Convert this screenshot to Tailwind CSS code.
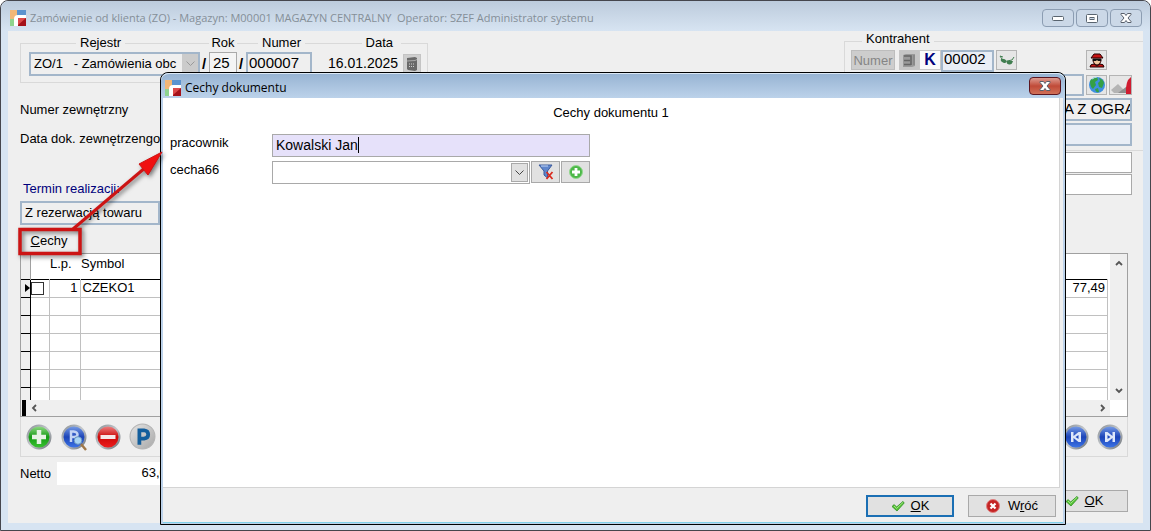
<!DOCTYPE html>
<html lang="pl">
<head>
    <meta charset="UTF-8">
    <meta name="viewport" content="width=device-width, initial-scale=1.0">
    <title>Zamówienie od klienta (ZO)</title>
    <script src="https://cdn.jsdelivr.net/npm/@tailwindcss/browser@4"></script>
</head>
<body class="relative min-h-screen bg-white font-['Liberation_Sans',Arial,sans-serif] text-[13px] leading-4 text-black">
    <!-- Shared icons -->
    <svg class="absolute size-0">
        <defs>
            <linearGradient id="gGreen" x1="0" y1="0" x2="0" y2="1"><stop offset="0" stop-color="#9adf8c"/><stop offset=".5" stop-color="#149a14"/><stop offset="1" stop-color="#3cc634"/></linearGradient>
            <linearGradient id="gBlue" x1="0" y1="0" x2="0" y2="1"><stop offset="0" stop-color="#7da2ea"/><stop offset=".5" stop-color="#1c44b8"/><stop offset="1" stop-color="#3f78ea"/></linearGradient>
            <linearGradient id="gRed" x1="0" y1="0" x2="0" y2="1"><stop offset="0" stop-color="#f08a8a"/><stop offset=".5" stop-color="#cc0808"/><stop offset="1" stop-color="#f02020"/></linearGradient>
            <linearGradient id="gGray" x1="0" y1="0" x2="1" y2="1"><stop offset="0" stop-color="#e4e4e4"/><stop offset="1" stop-color="#a8a8a8"/></linearGradient>
            <linearGradient id="gRing" x1="0" y1="0" x2="1" y2="1"><stop offset="0" stop-color="#8c9298"/><stop offset=".5" stop-color="#c4c8cc"/><stop offset="1" stop-color="#6c7278"/></linearGradient>
        </defs>
        <symbol id="logo" viewBox="0 0 16 16">
            <rect width="7" height="9" fill="#f2b777"/>
            <rect x="7" width="9" height="6" fill="#5b93cf"/>
            <rect y="9" width="4" height="7" fill="#8fd48f"/>
            <path d="M4 16V9q0-4 4-4h8v4H9v7z" fill="#fff"/>
            <rect x="8" y="8" width="8" height="8" fill="#a5121b"/>
            <path d="M8 8h8l-8 7z" fill="#dc4a4a"/>
        </symbol>
        <symbol id="tick" viewBox="0 0 14 12">
            <path d="M1 6.5 3.2 4.6 5.6 7 12 1.4 13.2 3 6 11z" fill="#55c234" stroke="#2f8f25" stroke-width=".8"/>
            <path d="M3 6 5.6 8.4 12 2.4" fill="none" stroke="#a9ea8c" stroke-width=".9"/>
        </symbol>
        <symbol id="cross" viewBox="0 0 12 10">
            <path d="M1 .500h3.500L6 2.500 7.500.500H11v1L8 5l3 3.500v1H7.500L6 7.500 4.500 9.500H1v-1L4 5 1 1.500z" fill="#fff" stroke="#59606c"/>
        </symbol>
    </svg>

    <!-- Main window -->
    <div class="flex min-h-screen flex-col rounded-t-lg border border-[#45464d] bg-[#d7e4f2]">
        <header class="flex h-[30px] items-center justify-between rounded-t-lg bg-linear-to-b from-[#bccbdc] to-[#d7e4f2] pt-1 pr-2 pl-[9px]">
            <div class="flex items-center gap-1 font-['Open_Sans','Noto_Sans',sans-serif] text-[11px] text-[#858f98]">
                <svg class="size-4"><use href="#logo"/></svg>
                <h1 class="whitespace-pre">Zamówienie od klienta (ZO) - Magazyn: M00001 MAGAZYN CENTRALNY  Operator: SZEF Administrator systemu</h1>
            </div>
            <div class="flex gap-[2px]">
                <button type="button" aria-label="Minimalizuj" class="flex h-[18px] w-8 items-center justify-center rounded-sm border border-[#8c9db2] bg-[#cbd8e7]">
                    <svg class="h-[5px] w-3" viewBox="0 0 12 5"><rect x=".5" y=".5" width="11" height="4" rx="1" fill="#fff" stroke="#59646f"/></svg>
                </button>
                <button type="button" aria-label="Maksymalizuj" class="flex h-[18px] w-8 items-center justify-center rounded-sm border border-[#8c9db2] bg-[#cbd8e7]">
                    <svg class="h-[9px] w-3" viewBox="0 0 12 9"><rect x=".5" y=".5" width="11" height="8" rx="1" fill="#fff" stroke="#59646f"/><rect x="4" y="3.5" width="4" height="2" fill="#cbd8e7" stroke="#59646f"/></svg>
                </button>
                <button type="button" aria-label="Zamknij" class="flex h-[18px] w-8 items-center justify-center rounded-sm border border-[#8c9db2] bg-[#cbd8e7]">
                    <svg class="h-[10px] w-3"><use href="#cross"/></svg>
                </button>
            </div>
        </header>

        <main class="mx-[7px] mb-[7px] flex grow flex-col bg-[#efefef]">
            <!-- Document header -->
            <div class="flex items-start justify-between pl-3">
                <div>
                    <div class="mt-3 flex h-10 w-[408px] gap-[2px] border border-[#d9d9d9] pl-2 text-[15px]">
                        <div class="flex w-[171px] flex-col">
                            <label for="rejestr" class="-mt-[10px] ml-[47px] self-start bg-[#efefef] px-1 text-[13px] leading-[18px]">Rejestr</label>
                            <div class="relative">
                                <select id="rejestr" class="h-6 w-full appearance-none border-2 border-[#a3b6ca] bg-[#efefef] pl-[3px] text-[13px]">
                                    <option>ZO/1 &nbsp; - Zamówienia obc</option>
                                </select>
                                <span class="pointer-events-none absolute top-[2px] right-[2px] flex h-5 w-4 items-center justify-center bg-[#cbcbcb]">
                                    <svg class="h-[6px] w-[9px]" viewBox="0 0 9 6"><path d="M.5 .5l4 4 4-4" fill="none" stroke="#9a9a9a"/></svg>
                                </span>
                            </div>
                        </div>
                        <span class="w-[5px] pt-[10px] leading-5 font-bold">/</span>
                        <div class="flex w-7 flex-col">
                            <label for="rok" class="-mt-[10px] bg-[#efefef] text-center text-[13px] leading-[18px]">Rok</label>
                            <input id="rok" value="25" class="h-6 w-full border border-[#a9a9a9] bg-[#f4f4f4] pb-[3px] pl-[3px]">
                        </div>
                        <span class="w-[5px] pt-[10px] leading-5 font-bold">/</span>
                        <div class="flex w-[66px] flex-col">
                            <label for="numer" class="-mt-[10px] ml-3 self-start bg-[#efefef] px-1 text-[13px] leading-[18px]">Numer</label>
                            <input id="numer" value="000007" class="h-6 w-full border-2 border-[#a3b6ca] bg-[#efefef] pb-[3px] pl-px">
                        </div>
                        <div class="ml-[14px] flex w-[73px] flex-col">
                            <label for="data" class="-mt-[10px] self-end bg-[#efefef] px-1 pr-2 text-[13px] leading-[18px]">Data</label>
                            <input id="data" value="16.01.2025" class="h-6 w-full bg-[#efefef] pb-[3px] text-sm">
                        </div>
                        <button type="button" aria-label="Kalendarz" class="mt-[10px] flex h-5 w-[18px] items-center justify-center border border-[#c4c4c4] bg-[#cfcfcf]">
                            <svg class="h-4 w-3" viewBox="0 0 12 16"><path d="M1 2l8-1 2 1v12l-2 1-7-1-1-1z" fill="#6a6a6a"/><path d="M1 5l8-.5 2-1" stroke="#aaa" fill="none"/><path d="M3 8h5M3 10.500h5" stroke="#d0d0d0" stroke-dasharray="1 1" fill="none"/></svg>
                        </button>
                    </div>
                    <label for="nrzew" class="mt-[19px] block">Numer zewnętrzny</label>
                    <label for="datazew" class="mt-[13px] block">Data dok. zewnętrzengo</label>
                </div>

                <fieldset class="mt-[10px] flex h-[110px] w-[299px] flex-col gap-[2px] border border-r-0 border-[#d9d9d9] pr-[11px] pl-[6px]">
                    <div class="flex h-[30px] flex-col">
                        <label for="kontrahent" class="-mt-[11px] mb-[3px] ml-[11px] self-start bg-[#efefef] px-1">Kontrahent</label>
                        <div class="flex h-[22px] text-base">
                            <button type="button" class="h-5 w-11 border border-[#bdbdbd] bg-[#cdcdcd] text-[13px] text-[#858585]">Numer</button>
                            <button type="button" aria-label="Kartoteka" class="ml-1 flex size-5 items-center justify-center bg-[#c6c6c6]">
                                <svg class="size-4" viewBox="0 0 16 16"><path d="M2 3l3-1h9v12l-3 1H2z" fill="#9a9a9a"/><path d="M3 4h7v9M3 8.500h6M3 12.500h7" stroke="#666" stroke-width="1.600" fill="none"/><path d="M13 3v10" stroke="#7a7a7a"/></svg>
                            </button>
                            <button type="button" class="h-5 w-[22px] border border-[#c8c8c8] bg-[#fafafa] leading-4 font-bold text-[#00007c]">K</button>
                            <input id="kontrahent" value="00002" class="h-[22px] w-[53px] border-2 border-[#a3b6ca] bg-[#e9eef6] pb-[3px] pl-px text-[15px]">
                            <button type="button" aria-label="Podgląd" class="ml-[2px] flex h-5 w-[21px] items-center justify-center border border-[#b4b4b4] bg-[#e6e6e6]">
                                <svg class="h-3 w-4" viewBox="0 0 16 12"><path d="M3 5L1 2l3 1M8 7l5-1 2-3" fill="none" stroke="#417e50"/><path d="M2 5q3-1 6 2-1 3-4 1.500T2 5zM8 7h6q-1 4-4 3.500T8 7z" fill="#417e50"/></svg>
                            </button>
                            <button type="button" aria-label="Operator" class="mr-[25px] ml-auto flex h-5 w-[21px] items-center justify-center border border-[#b4b4b4] bg-[#e6e6e6]">
                                <svg class="size-4" viewBox="0 0 16 16"><path d="M2 6l3-4h6l3 4z" fill="#c81414" stroke="#200"/><path d="M4 7h8v2q-1 4-4 4T4 9z" fill="#f0c8a0" stroke="#300"/><path d="M4 7h8v2H9L8 8 7 9H4z" fill="#111"/><path d="M1 15q0-3 4-3l3 2 3-2q4 0 4 3z" fill="#c81414" stroke="#200"/></svg>
                            </button>
                        </div>
                    </div>
                    <div class="flex h-[22px] items-center">
                        <input aria-label="Grupa" class="mr-[2px] h-[22px] min-w-0 grow border-2 border-[#a3b6ca] bg-[#efefef]">
                        <button type="button" aria-label="Strona WWW" class="flex h-5 w-[21px] items-center justify-center border border-[#b4b4b4] bg-[#e6e6e6]">
                            <svg class="size-[18px]" viewBox="0 0 18 18"><circle cx="9" cy="9" r="8" fill="#3f8fe0"/><path d="M2 5q3-4 7-4l1 3-3 2 1 3-3 4q-3-2-3-8zM11 2q4 1 5 5l-2 5-3-1-1-4 2-2zM7 13l3-1 1 4q-3 1-4-3z" fill="#35a045"/><path d="M4 3q3-2 5-2" stroke="#bfe4ff" fill="none"/></svg>
                        </button>
                        <button type="button" aria-label="Status" class="ml-[2px] flex h-5 w-[23px] items-center justify-end border border-[#b4b4b4] bg-[#e6e6e6]">
                            <svg class="h-[18px] w-5" viewBox="0 0 20 18"><path d="M0 14l7-6 9 9H3z" fill="#b4b4b4"/><path d="M7 17l8-6v6z" fill="#8e8e8e"/><path d="M20 1q-6 4-5 17h5z" fill="#d01c30"/></svg>
                        </button>
                    </div>
                    <input aria-label="Nazwa kontrahenta" value="KA Z OGRANICZONĄ" class="h-[23px] w-full border-2 border-[#a3b6ca] bg-[#efefef] pb-[3px] pl-[201px] text-[15px]">
                    <input aria-label="Adres kontrahenta" class="h-[23px] w-full border-2 border-[#a3b6ca] bg-[#e9eef6]">
                </fieldset>
            </div>

            <div class="flex justify-between pr-[11px] pl-3">
                <div class="pt-[30px]">
                    <label for="rezerwacja" class="block pl-[3px] text-[#00007c]">Termin realizacji:</label>
                    <select id="rezerwacja" class="mt-1 block h-6 w-[140px] appearance-none border-2 border-[#a3b6ca] bg-[#efefef] pl-[3px]">
                        <option>Z rezerwacją towaru</option>
                    </select>
                </div>
                <div class="flex w-[200px] flex-col gap-px pt-px">
                    <input id="nrzew" class="h-[21px] border border-[#a9a9a9] bg-white">
                    <input id="datazew" class="h-[21px] border border-[#a9a9a9] bg-white">
                </div>
            </div>

            <button type="button" class="mt-1 ml-3 h-6 w-[58px] self-start"><u>C</u>echy</button>

            <!-- Items grid -->
            <section class="mr-[15px] ml-3">
                <div class="border border-[#a0a0a0] bg-white">
                    <div class="flex">
                        <table class="w-full table-fixed border-collapse">
                            <thead>
                                <tr class="h-[25px] border-b border-black align-top text-left">
                                    <th class="w-[9px] border-r border-[#a0a0a0] bg-[#efefef]"></th>
                                    <th class="w-[19px]"></th>
                                    <th class="w-[31px] pt-[2px] pl-px font-normal">L.p.</th>
                                    <th class="pt-[2px] pl-px font-normal">Symbol</th>
                                    <th class="w-[120px]"></th>
                                </tr>
                            </thead>
                            <tbody>
                                <tr class="h-[18px]">
                                    <td class="border-r border-b border-black bg-[#efefef]"><svg class="ml-auto h-[8px] w-[5px]" viewBox="0 0 5 8"><path d="M0 0l5 4-5 4z"/></svg></td>
                                    <td class="border border-t-0 border-[#c0c0c0]"><input type="checkbox" aria-label="Zaznacz pozycję 1" class="block size-[13px] appearance-none border border-[#333] bg-white"></td>
                                    <td class="border border-t-0 border-[#c0c0c0] pr-[2px] text-right">1</td>
                                    <td class="border border-t-0 border-[#c0c0c0] pl-[2px]">CZEKO1</td>
                                    <td class="border border-t-0 border-[#c0c0c0] pr-[2px] text-right">77,49</td>
                                </tr>
                                <tr class="h-[18px]"><td class="border-r border-b border-black bg-[#efefef]"></td><td class="border border-[#c0c0c0]"></td><td class="border border-[#c0c0c0]"></td><td class="border border-[#c0c0c0]"></td><td class="border border-[#c0c0c0]"></td></tr>
                                <tr class="h-[18px]"><td class="border-r border-b border-black bg-[#efefef]"></td><td class="border border-[#c0c0c0]"></td><td class="border border-[#c0c0c0]"></td><td class="border border-[#c0c0c0]"></td><td class="border border-[#c0c0c0]"></td></tr>
                                <tr class="h-[18px]"><td class="border-r border-b border-black bg-[#efefef]"></td><td class="border border-[#c0c0c0]"></td><td class="border border-[#c0c0c0]"></td><td class="border border-[#c0c0c0]"></td><td class="border border-[#c0c0c0]"></td></tr>
                                <tr class="h-[18px]"><td class="border-r border-b border-black bg-[#efefef]"></td><td class="border border-[#c0c0c0]"></td><td class="border border-[#c0c0c0]"></td><td class="border border-[#c0c0c0]"></td><td class="border border-[#c0c0c0]"></td></tr>
                                <tr class="h-[18px]"><td class="border-r border-b border-black bg-[#efefef]"></td><td class="border border-[#c0c0c0]"></td><td class="border border-[#c0c0c0]"></td><td class="border border-[#c0c0c0]"></td><td class="border border-[#c0c0c0]"></td></tr>
                                <tr class="h-[13px]"><td class="border-r border-black bg-[#efefef]"></td><td class="border-x border-[#c0c0c0]"></td><td class="border-x border-[#c0c0c0]"></td><td class="border-x border-[#c0c0c0]"></td><td class="border-x border-[#c0c0c0]"></td></tr>
                            </tbody>
                        </table>
                        <div class="ml-[2px] flex w-[17px] shrink-0 flex-col items-center justify-between bg-[#efefef] py-[6px]">
                            <svg class="h-[6px] w-2" viewBox="0 0 8 6"><path d="M1 5l3-3 3 3" fill="none" stroke="#555" stroke-width="1.800"/></svg>
                            <svg class="h-[6px] w-2" viewBox="0 0 8 6"><path d="M1 1l3 3 3-3" fill="none" stroke="#555" stroke-width="1.800"/></svg>
                        </div>
                    </div>
                    <div class="mr-[17px] flex h-4 items-center bg-[#efefef] pr-1">
                        <span class="ml-px h-4 w-1 bg-black"></span>
                        <svg class="ml-[5px] h-2 w-[6px]" viewBox="0 0 6 8"><path d="M5 1L2 4l3 3" fill="none" stroke="#555" stroke-width="1.800"/></svg>
                        <svg class="ml-auto h-2 w-[6px]" viewBox="0 0 6 8"><path d="M1 1l3 3-3 3" fill="none" stroke="#555" stroke-width="1.800"/></svg>
                    </div>
                </div>
                <!-- Grid toolbar -->
                <div class="flex h-10 items-center gap-2 border border-t-0 border-[#d9d9d9] px-1">
                    <button type="button" aria-label="Dodaj"><svg class="mx-[1px] size-[26px]" viewBox="0 0 26 26"><circle cx="13" cy="13" r="11.500" fill="url(#gGreen)" stroke="url(#gRing)" stroke-width="2"/><path d="M13 6v14M6 13h14" stroke="#e6f2e4" stroke-width="4.500"/></svg></button>
                    <button type="button" aria-label="Pokaż"><svg class="h-7 w-[26px]" viewBox="0 0 26 28"><circle cx="13" cy="14" r="11.500" fill="url(#gBlue)" stroke="url(#gRing)" stroke-width="2"/><path d="M10 19V8.500h2.500q4 .5 4 3T12.500 14H10" fill="none" stroke="#c4d4f4" stroke-width="2.500"/><circle cx="17" cy="17.500" r="3.800" fill="#a8d4f4" stroke="#6896c0"/><path d="M20 21l5 6" stroke="#a07848" stroke-width="2.500"/></svg></button>
                    <button type="button" aria-label="Usuń"><svg class="size-[26px]" viewBox="0 0 26 26"><circle cx="13" cy="13" r="11.500" fill="url(#gRed)" stroke="url(#gRing)" stroke-width="2"/><path d="M5.500 13h15" stroke="#f6e8e8" stroke-width="4"/></svg></button>
                    <button type="button" aria-label="Parametry"><svg class="size-[27px]" viewBox="0 0 26 26"><circle cx="13" cy="13" r="12" fill="url(#gGray)" stroke="#b4b4b4"/><path d="M10 21V7h4.500q4 .5 4 4t-4 4H10" fill="none" stroke="#135e9c" stroke-width="3.600"/></svg></button>
                    <button type="button" aria-label="Pierwszy" class="ml-auto"><svg class="size-[26px]" viewBox="0 0 26 26"><circle cx="13" cy="13" r="11.500" fill="url(#gBlue)" stroke="url(#gRing)" stroke-width="2"/><path d="M8 8h2.500v4l5-4H18v10h-2.500l-5-4v4H8zM15.500 11l-3 2 3 2z" fill="#dfe8fa" fill-rule="evenodd"/></svg></button>
                    <button type="button" aria-label="Ostatni"><svg class="size-[26px]" viewBox="0 0 26 26"><circle cx="13" cy="13" r="11.500" fill="url(#gBlue)" stroke="url(#gRing)" stroke-width="2"/><path d="M18 8h-2.500v4l-5-4H8v10h2.500l5-4v4H18zM10.500 11l3 2-3 2z" fill="#dfe8fa" fill-rule="evenodd"/></svg></button>
                </div>
            </section>

            <div class="mr-[15px] ml-3 flex items-start justify-between pt-[5px]">
                <div class="flex items-center gap-[6px]">
                    <label for="netto">Netto</label>
                    <input id="netto" value="63,00" class="h-[23px] w-[120px] bg-white pr-[3px] pb-[2px] text-right">
                </div>
                <button type="button" class="mt-7 flex h-[22px] w-[88px] items-center justify-center gap-[6px] border border-[#a9a9a9] bg-[#e1e1e1]">
                    <svg class="h-3 w-[14px]"><use href="#tick"/></svg>
                    <span><u>O</u>K</span>
                </button>
            </div>
        </main>
    </div>

    <!-- Dialog window -->
    <div role="dialog" aria-labelledby="dialogTitle" class="absolute top-[72px] right-[85px] left-[160px] flex h-[453px] flex-col rounded-t-lg border border-black bg-[#bcd2ea]">
        <header class="flex h-[25px] items-center justify-between rounded-t-lg border-t border-[#dbe8f5] bg-linear-to-b from-[#98b4d3] to-[#bcd2ea] pr-1 pl-1">
            <div class="flex items-center gap-1 pt-1 font-['Open_Sans','Noto_Sans',sans-serif] text-xs">
                <svg class="size-4"><use href="#logo"/></svg>
                <h2 id="dialogTitle">Cechy dokumentu</h2>
            </div>
            <button type="button" aria-label="Zamknij" class="flex h-[18px] w-8 items-center justify-center rounded-sm border border-[#5c1620] bg-linear-to-b from-[#dc9a90] via-[#c04a38] to-[#d07058]">
                <svg class="h-[10px] w-3"><use href="#cross"/></svg>
            </button>
        </header>
        <div class="mx-[2px] mb-px flex grow flex-col border-b border-[#7fd0ea] bg-[#efefef]">
            <div class="mr-[3px] grow border-r border-b border-[#d4d4d4] bg-white">
                <h3 class="pt-[7px] text-center">Cechy dokumentu 1</h3>
                <div class="mt-[13px] grid grid-cols-[102px_318px] gap-y-1 pl-[7px]">
                    <label for="pracownik" class="pt-px">pracownik</label>
                    <div class="relative">
                        <input id="pracownik" value="Kowalski Jan" class="h-[23px] w-full border border-[#a9a9a9] bg-[#e6e1fa] pb-[2px] pl-[3px] text-sm">
                        <span class="absolute top-[3px] left-[86px] h-4 w-px bg-black"></span>
                    </div>
                    <label for="cecha66" class="pt-px">cecha66</label>
                    <div class="flex gap-px">
                        <div class="relative grow">
                            <select id="cecha66" class="h-[23px] w-full appearance-none border border-[#a9a9a9] bg-white">
                                <option></option>
                            </select>
                            <span class="pointer-events-none absolute top-[2px] right-[2px] flex h-[19px] w-[17px] items-center justify-center border border-[#a9a9a9] bg-[#e1e1e1]">
                                <svg class="h-[6px] w-[9px]" viewBox="0 0 9 6"><path d="M.5 .5l4 4 4-4" fill="none" stroke="#444"/></svg>
                            </span>
                        </div>
                        <button type="button" aria-label="Wyczyść filtr" class="flex h-[22px] w-[29px] items-center justify-center border border-[#a9a9a9] bg-[#e1e1e1]">
                            <svg class="size-4" viewBox="0 0 16 16"><path d="M1 1h13L9.500 7v7L6 11V7z" fill="#5f86cc" stroke="#3b5a9c"/><path d="M3 2h7" stroke="#c3d6f6"/><path d="M8.500 8l6 7M14.500 8l-6 7" stroke="#d92c20" stroke-width="1.800"/></svg>
                        </button>
                        <button type="button" aria-label="Dodaj cechę" class="flex h-[22px] w-[29px] items-center justify-center border border-[#a9a9a9] bg-[#e1e1e1]">
                            <svg class="size-[14px]" viewBox="0 0 14 14"><circle cx="7" cy="7" r="6.500" fill="#4cb848" stroke="#94d890"/><path d="M7 3v8M3 7h8" stroke="#fff" stroke-width="2.800"/></svg>
                        </button>
                    </div>
                </div>
            </div>
            <div class="flex h-[34px] items-center justify-end gap-[14px] pt-[2px] pr-[7px]">
                <button type="button" class="flex h-[22px] w-[88px] items-center justify-center gap-[6px] border-2 border-[#1b6fb4] bg-[#e1e1e1]">
                    <svg class="h-3 w-[14px]"><use href="#tick"/></svg>
                    <span><u>O</u>K</span>
                </button>
                <button type="button" class="flex h-[22px] w-[88px] items-center justify-center gap-2 border border-[#a9a9a9] bg-[#e1e1e1]">
                    <svg class="size-[14px]" viewBox="0 0 14 14"><circle cx="7" cy="7" r="6.500" fill="#c42424" stroke="#e08080"/><path d="M4.500 4.500l5 5M9.500 4.500l-5 5" stroke="#fff" stroke-width="2.200"/></svg>
                    <span>W<u>r</u>óć</span>
                </button>
            </div>
        </div>
    </div>

    <!-- Highlight frame and arrow -->
    <svg class="pointer-events-none absolute top-[145px] left-[15px] h-[120px] w-[150px] drop-shadow-[2px_2px_2px_rgba(0,0,0,0.5)]" viewBox="0 0 150 120">
        <rect x="5" y="84.500" width="60" height="24" fill="none" stroke="#cc1414" stroke-width="3.500"/>
        <path d="M58 84L131 22" stroke="#cc1414" stroke-width="3"/>
        <path d="M147 7L124 19l9 11z" fill="#f01010" stroke="#cc1414"/>
    </svg>
</body>
</html>
